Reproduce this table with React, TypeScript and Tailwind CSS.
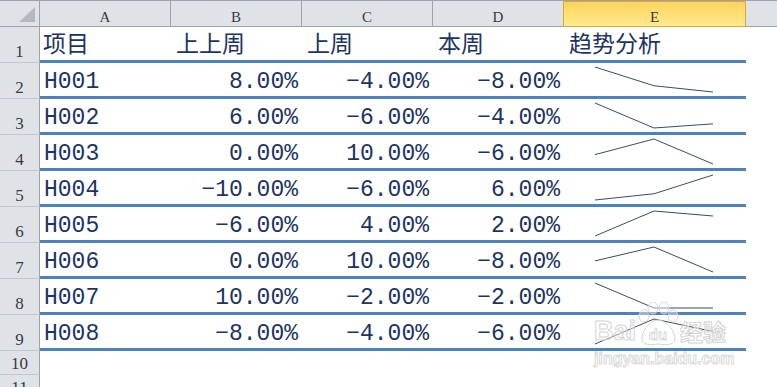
import React from 'react';

// Spreadsheet grid: row header + columns A..E + a sliver of F
const GRID = 'grid grid-cols-[40px_131px_131px_131px_131px_182px_1fr]';

type Row = { id: string; vals: [number, number, number] };

const rows: Row[] = [
  { id: 'H001', vals: [8, -4, -8] },
  { id: 'H002', vals: [6, -6, -4] },
  { id: 'H003', vals: [0, 10, -6] },
  { id: 'H004', vals: [-10, -6, 6] },
  { id: 'H005', vals: [-6, 4, 2] },
  { id: 'H006', vals: [0, 10, -8] },
  { id: 'H007', vals: [10, -2, -2] },
  { id: 'H008', vals: [-8, -4, -6] },
];

const pct = (v: number) => (v < 0 ? '\u2212' : '') + Math.abs(v).toFixed(2) + '%';

const Sparkline: React.FC<{ vals: number[] }> = ({ vals }) => {
  const max = Math.max(...vals);
  const min = Math.min(...vals);
  const xs = [31, 90, 149];
  const pts = vals
    .map((v, i) => `${xs[i]},${4 + ((max - v) / (max - min || 1)) * 25}`)
    .join(' ');
  return (
    <svg width="182" height="33" className="block">
      <polyline points={pts} fill="none" stroke="#3a4a6a" strokeWidth="1" />
    </svg>
  );
};

const RowHead: React.FC<{ n: number; tall?: boolean }> = ({ n, tall }) => (
  <div
    className={`${tall ? 'h-[36px]' : 'h-[24px]'} bg-[#dfe3e8] border-r border-b border-r-[#9ea3aa] border-b-[#c4c8ce] flex items-end justify-center font-['Liberation_Serif',serif] text-[17px] leading-[20px] text-[#3a3a3a]`}
  >
    {n}
  </div>
);

const textCls =
  "font-['Liberation_Mono','Noto_Sans_CJK_SC',monospace] text-[23px] leading-[26px] text-[#1c3461]";
const cellCls = 'h-[36px] border-b-[3px] border-[#4f81bd] flex items-end pb-[1px]';

export default function App() {
  return (
    <div className="relative w-[777px] h-[387px] overflow-hidden bg-white">
      {/* column headers */}
      <div className={`${GRID} h-[27px] border-t border-[#9da3aa] bg-[#dfe3e8] font-['Liberation_Serif',serif] text-[15px] leading-[18px] text-[#3a3a3a]`}>
        <div className="relative border-r border-b border-[#9ea3aa]">
          <svg width="18" height="16" className="absolute right-[3px] bottom-[3px]">
            <polygon points="17,0 17,15 1,15" fill="#b4b9bf" />
          </svg>
        </div>
        <div className="border-r border-b border-[#9ea3aa] flex justify-center pt-[7px]">A</div>
        <div className="border-r border-b border-[#9ea3aa] flex justify-center pt-[7px]">B</div>
        <div className="border-r border-b border-[#9ea3aa] flex justify-center pt-[7px]">C</div>
        <div className="border-r border-b border-r-[#e1a43a] border-b-[#9ea3aa] flex justify-center pt-[7px]">D</div>
        <div className="border-r border-b border-t border-[#e1a43a] bg-linear-to-b from-[#ffd45a] to-[#ffea8e] flex justify-center pt-[6px]">E</div>
        <div className="border-b border-[#9ea3aa]" />
      </div>

      {/* row 1: headings */}
      <div className={GRID}>
        <RowHead n={1} tall />
        <div className={`${cellCls} pl-[3px]`}>
          <span className={textCls}>项目</span>
        </div>
        <div className={`${cellCls} pl-[5px]`}>
          <span className={textCls}>上上周</span>
        </div>
        <div className={`${cellCls} pl-[5px]`}>
          <span className={textCls}>上周</span>
        </div>
        <div className={`${cellCls} pl-[5px]`}>
          <span className={textCls}>本周</span>
        </div>
        <div className={`${cellCls} pl-[5px]`}>
          <span className={textCls}>趋势分析</span>
        </div>
        <div />
      </div>

      {rows.map((r, i) => (
        <div key={r.id} className={GRID}>
          <RowHead n={i + 2} tall />
          <div className={`${cellCls} pl-[4px]`}>
            <span className={textCls}>{r.id}</span>
          </div>
          {r.vals.map((v, j) => (
            <div key={j} className={`${cellCls} justify-end pr-[4px]`}>
              <span className={textCls}>{pct(v)}</span>
            </div>
          ))}
          <div className="h-[36px] border-b-[3px] border-[#4f81bd]">
            <Sparkline vals={r.vals} />
          </div>
          <div />
        </div>
      ))}

      <div className={GRID}>
        <RowHead n={10} />
      </div>
      <div className={GRID}>
        <RowHead n={11} />
      </div>

      {/* watermark */}
      <div className="absolute left-[594px] top-[300px] flex flex-col pointer-events-none">
        <div className="flex items-end h-[46px]">
          <span className="font-['Liberation_Sans',sans-serif] font-bold text-[27px] leading-[30px] text-white/40 [-webkit-text-stroke:1px_#d4d4d4]">
            Bai
          </span>
          <svg width="42" height="44" className="mx-[1px]">
            <g fill="rgba(255,255,255,0.4)" stroke="#d4d4d4" strokeWidth="1">
              <ellipse cx="7" cy="14" rx="5" ry="6" />
              <ellipse cx="16" cy="6" rx="5" ry="6" />
              <ellipse cx="27" cy="6" rx="5" ry="6" />
              <ellipse cx="36" cy="14" rx="5" ry="6" />
              <path d="M21 18 C13 18 4 30 5 37 C6 44 15 43 21 42 C27 43 37 44 38 37 C39 30 29 18 21 18 Z" />
            </g>
            <text
              x="21"
              y="38"
              textAnchor="middle"
              fontFamily="Liberation Sans, sans-serif"
              fontWeight="bold"
              fontSize="15"
              fill="rgba(255,255,255,0.5)"
              stroke="#d4d4d4"
              strokeWidth="0.8"
            >
              du
            </text>
          </svg>
          <span className="font-['Noto_Sans_CJK_SC',sans-serif] font-bold text-[23px] leading-[30px] text-white/40 [-webkit-text-stroke:1px_#d4d4d4]">
            经验
          </span>
        </div>
        <span className="mt-[4px] font-['Liberation_Sans',sans-serif] font-bold text-[16px] leading-[18px] text-white/40 [-webkit-text-stroke:1px_#dadada]">
          jingyan.baidu.com
        </span>
      </div>
    </div>
  );
}
